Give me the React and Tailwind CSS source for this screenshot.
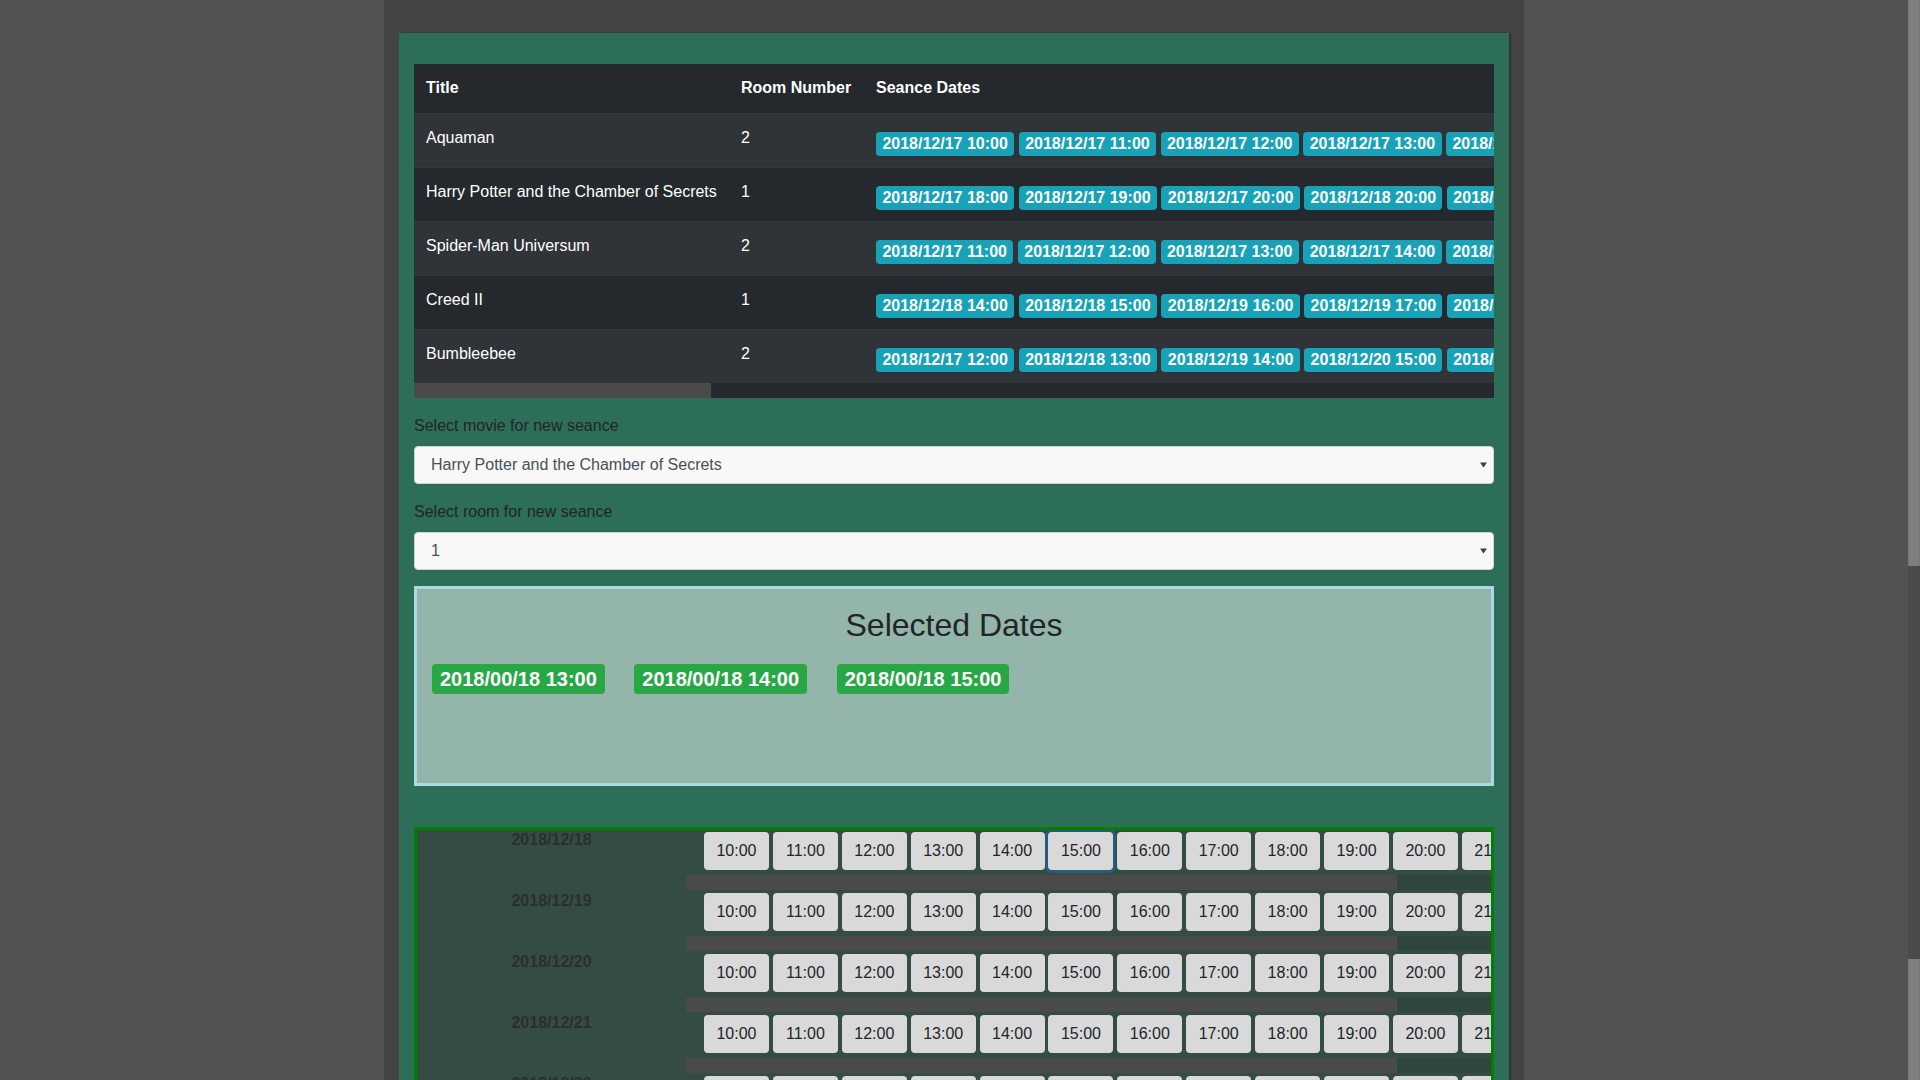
import React from "react";

const movies = [
  { title: "Aquaman", room: "2", dates: ["2018/12/17 10:00", "2018/12/17 11:00", "2018/12/17 12:00", "2018/12/17 13:00", "2018/12/17 14:00", "2018/12/17 15:00"] },
  { title: "Harry Potter and the Chamber of Secrets", room: "1", dates: ["2018/12/17 18:00", "2018/12/17 19:00", "2018/12/17 20:00", "2018/12/18 20:00", "2018/12/18 21:00", "2018/12/19 18:00"] },
  { title: "Spider-Man Universum", room: "2", dates: ["2018/12/17 11:00", "2018/12/17 12:00", "2018/12/17 13:00", "2018/12/17 14:00", "2018/12/17 15:00", "2018/12/17 16:00"] },
  { title: "Creed II", room: "1", dates: ["2018/12/18 14:00", "2018/12/18 15:00", "2018/12/19 16:00", "2018/12/19 17:00", "2018/12/20 18:00", "2018/12/20 19:00"] },
  { title: "Bumbleebee", room: "2", dates: ["2018/12/17 12:00", "2018/12/18 13:00", "2018/12/19 14:00", "2018/12/20 15:00", "2018/12/21 16:00", "2018/12/22 17:00"] },
];

const times = ["10:00", "11:00", "12:00", "13:00", "14:00", "15:00", "16:00", "17:00", "18:00", "19:00", "20:00", "21:00", "22:00"];
const days = ["2018/12/18", "2018/12/19", "2018/12/20", "2018/12/21", "2018/12/22", "2018/12/23"];

function Select({ value }) {
  return (
    <div className="h-[38px] rounded-[4px] bg-[#f8f8f8] border border-[#cfd3d6] flex items-center justify-between pl-[16px] pr-[6px] text-[16px] text-[#495057]">
      <span>{value}</span>
      <svg width="7" height="6" viewBox="0 0 7 6">
        <path d="M0 0.5H7L3.5 5.5Z" fill="#3a3f44" />
      </svg>
    </div>
  );
}

export default function App() {
  return (
    <div className="w-[1920px] h-[1080px] overflow-hidden flex bg-[#525252] font-['Liberation_Sans',Arial,sans-serif]">
      <div className="flex-1 flex justify-center">
        <div className="w-[1140px] h-full bg-[#444444] px-[15px] pt-[33px]">
          <div className="h-full bg-[#2d6e58] px-[15px] pt-[31px] shadow-[2px_0_2px_rgba(0,0,0,0.3)]">
            {/* Table */}
            <div className="w-[1080px] overflow-hidden text-white">
              <div className="flex h-[49px] bg-[#25282c] font-bold text-[16px] leading-6">
                <div className="w-[315px] shrink-0 px-[12px] pt-[12px]">Title</div>
                <div className="w-[135px] shrink-0 px-[12px] pt-[12px]">Room Number</div>
                <div className="flex-1 px-[12px] pt-[12px]">Seance Dates</div>
              </div>
              {movies.map((m, i) => (
                <div
                  key={m.title}
                  className={`flex h-[54px] border-t border-[#32383e] text-[16px] leading-6 ${i % 2 === 0 ? "bg-[#303338]" : "bg-[#25282c]"}`}
                >
                  <div className="w-[315px] shrink-0 px-[12px] pt-[12px]">{m.title}</div>
                  <div className="w-[135px] shrink-0 px-[12px] pt-[12px]">{m.room}</div>
                  <div className="flex-1 min-w-0 pl-[12px] pt-[18px]">
                    <div className="flex gap-[4.5px] whitespace-nowrap">
                      {m.dates.map((d) => (
                        <span
                          key={d}
                          className="shrink-0 h-[24px] px-[6.4px] rounded-[4px] bg-[#17a2b8] text-white font-bold text-[16px] leading-[24px]"
                        >
                          {d}
                        </span>
                      ))}
                    </div>
                  </div>
                </div>
              ))}
              <div className="h-[15px] bg-[#25282c] flex">
                <div className="w-[297px] h-full bg-[#4b4b4b]" />
              </div>
            </div>

            {/* Form */}
            <div className="mt-[16px] text-[16px] leading-6 text-[#212529] mb-2">Select movie for new seance</div>
            <Select value="Harry Potter and the Chamber of Secrets" />
            <div className="mt-[16px] text-[16px] leading-6 text-[#212529] mb-2">Select room for new seance</div>
            <Select value="1" />

            {/* Selected dates */}
            <div className="mt-[16px] h-[200px] border-[3px] border-[#add8e6] bg-[#94b5a9]">
              <div className="pt-[17px] text-center text-[32px] leading-[38px] text-[#212529]">Selected Dates</div>
              <div className="mt-[20px] pl-[15px] flex gap-[29.5px]">
                {["2018/00/18 13:00", "2018/00/18 14:00", "2018/00/18 15:00"].map((d) => (
                  <span
                    key={d}
                    className="h-[30px] px-[8px] rounded-[4px] bg-[#28a745] text-white font-bold text-[20px] leading-[30px]"
                  >
                    {d}
                  </span>
                ))}
              </div>
            </div>

            {/* Schedule */}
            <div className="mt-[41px] border-[3px] border-[#008000] bg-[#344c44]">
              {days.map((day, r) => (
                <div key={day} className="flex">
                  <div className="w-[269px] shrink-0 text-center font-bold text-[16px] leading-[19px] text-[#2a2f2d]">
                    {day}
                  </div>
                  <div className="flex-1 min-w-0 overflow-hidden">
                    <div className="pt-[2px] pl-[18px] flex gap-[3.9px]">
                      {times.map((t, c) => (
                        <div
                          key={t}
                          className={`shrink-0 w-[65px] h-[38px] rounded-[4px] bg-[#d9d9d9] text-[#212529] text-[16px] flex items-center justify-center ${
                            r === 0 && c === 5 ? "shadow-[0_0_0_3px_#2b5a7b]" : ""
                          }`}
                        >
                          {t}
                        </div>
                      ))}
                    </div>
                    <div className="mt-[5px] h-[15px] bg-[#2f463f] flex">
                      <div className="w-[711px] h-full bg-[#4a4a4a]" />
                    </div>
                    <div className="h-[1px]" />
                  </div>
                </div>
              ))}
            </div>
          </div>
        </div>
      </div>
      <div className="w-[12px] h-full flex flex-col bg-[#4a4a4a]">
        <div className="h-[566px] bg-[#7f7f7f] border-x border-[#777]" />
        <div className="h-[393px]" />
        <div className="flex-1 bg-[#7f7f7f] border-x border-[#777]" />
      </div>
    </div>
  );
}
